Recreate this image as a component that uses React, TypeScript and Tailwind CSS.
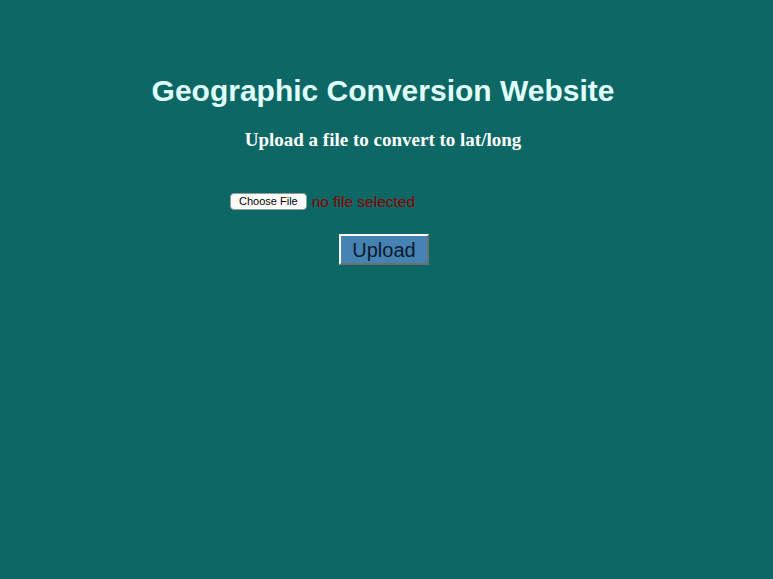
export default function App() {
  return (
    <div className="min-h-[579px] w-full bg-[#0d6764] pt-[73px]">
      <h1 className="pr-[7px] text-center font-['Liberation_Sans',Arial,sans-serif] text-[30px] font-bold leading-[36px] text-[#e0ffff]">
        Geographic Conversion Website
      </h1>
      <h3 className="mt-[19px] pr-[7px] text-center font-['Liberation_Serif','Times_New_Roman',serif] text-[19px] font-bold leading-[24px] text-white">
        Upload a file to convert to lat/long
      </h3>

      <div className="mt-[41px] flex items-center pl-[230px] font-['Liberation_Sans',Arial,sans-serif]">
        <button className="h-[17px] rounded-[4px] border border-[#9a9a9a] bg-white px-[8px] text-[11px] leading-[15px] text-black">
          Choose File
        </button>
        <span className="ml-[5px] text-[15.5px] leading-[17px] text-[#8b0000]">no file selected</span>
      </div>

      <div className="mt-[24px] flex pl-[339px]">
        <button className="h-[31px] w-[90px] border-2 border-t-white border-l-white border-r-[#6e6e6e] border-b-[#6e6e6e] bg-[#4682b4] font-['Liberation_Sans',Arial,sans-serif] text-[20px] leading-[26px] text-[#0b1a2a]">
          Upload
        </button>
      </div>
    </div>
  );
}
